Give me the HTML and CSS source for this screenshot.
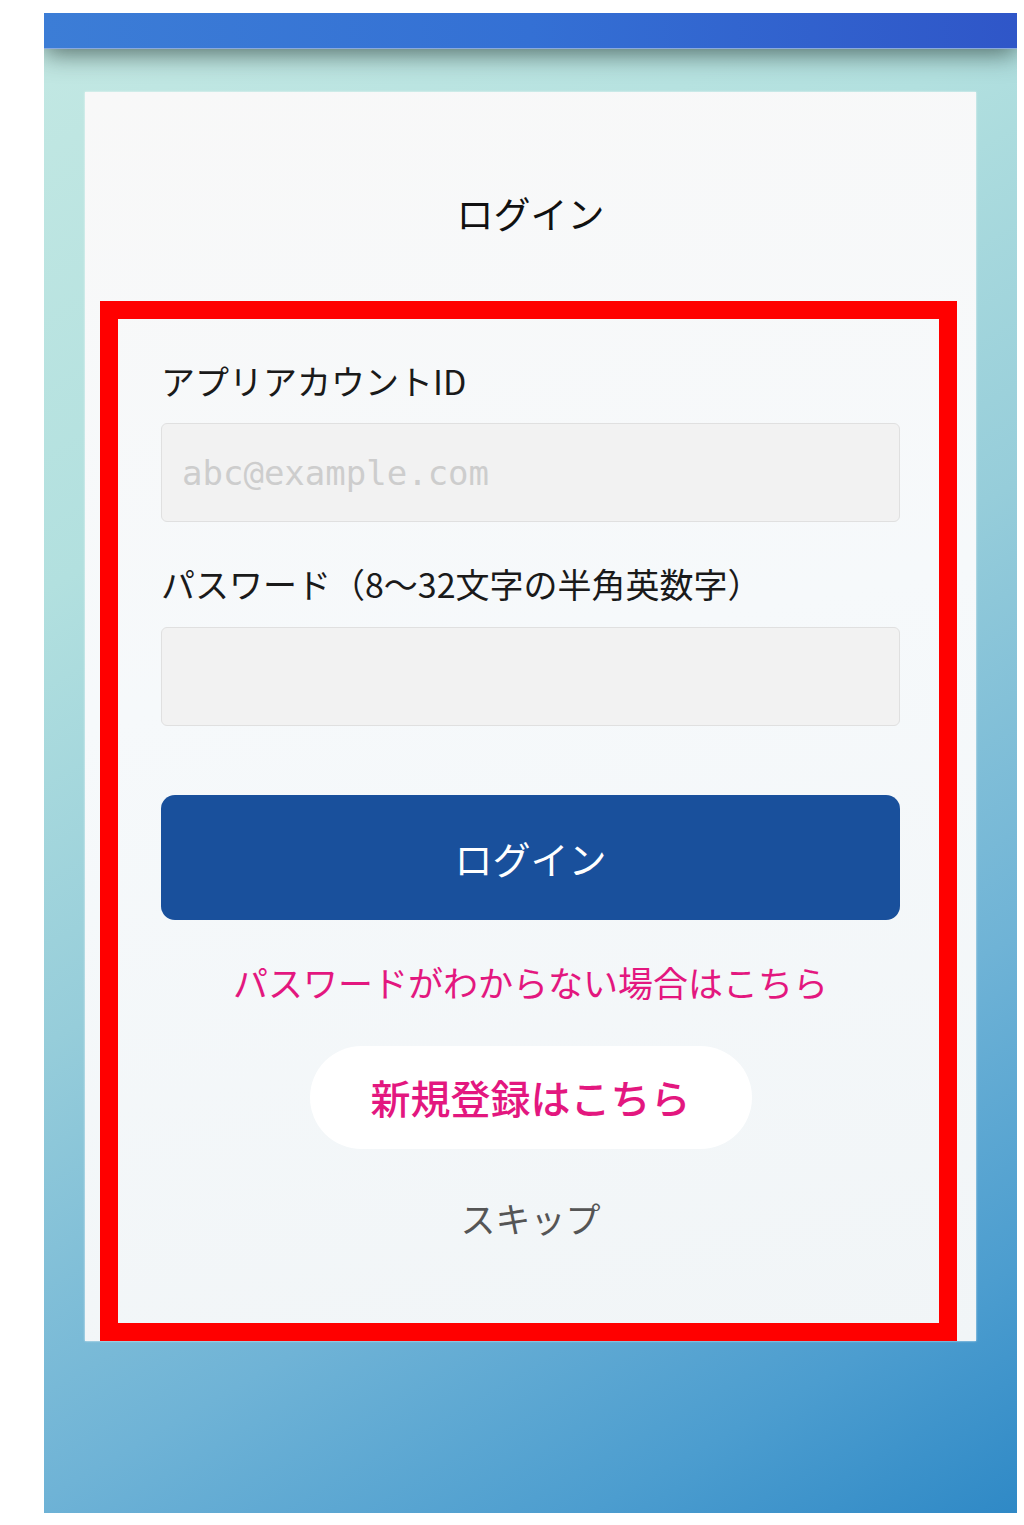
FILE: index.html
```html
<!DOCTYPE html>
<html lang="ja">
<head>
    <meta charset="UTF-8">
    <meta name="viewport" content="width=device-width, initial-scale=1.0">
    <title>ログイン</title>
    <link rel="stylesheet" href="styles.css">
</head>
<body>
    <div class="screen">
        <div class="app-bar"></div>

        <div class="login-card">
            <h1 class="login-title">ログイン</h1>

            <div class="highlight">
                <label class="field-label" for="account-id">アプリアカウントID</label>
                <input class="field-input mono" id="account-id" type="text" placeholder="abc@example.com">

                <label class="field-label" for="password">パスワード（8〜32文字の半角英数字）</label>
                <input class="field-input" id="password" type="password">

                <button class="login-btn" type="button">ログイン</button>

                <a class="forgot-link" href="#">パスワードがわからない場合はこちら</a>

                <a class="register-btn" href="#">新規登録はこちら</a>

                <a class="skip-link" href="#">スキップ</a>
            </div>
        </div>
    </div>
</body>
</html>
```

FILE: styles.css
```css
body {
    margin: 0;
    background: #fff;
    font-family: "Noto Sans CJK JP", "Noto Sans", sans-serif;
}
.screen {
    margin: 13px 0 0 44px;
    width: 973px;
    height: 1500px;
    overflow: hidden;
    background: linear-gradient(150deg, #c3e8e3 0%, #b2e0df 28%, #96cdda 50%, #6fb3d6 72%, #4c9dcf 88%, #2f89c6 100%);
}
.app-bar {
    position: relative;
    height: 35px;
    background: linear-gradient(90deg, #3c7dd6 0%, #3470d4 50%, #2f56c8 100%);
    border-bottom: 1px solid #8aa9de;
    box-shadow: 0 4px 26px rgba(40, 60, 55, 0.75);
}
.login-card {
    margin: 43px 41px 0 41px;
    padding-top: 97px;
    background: linear-gradient(170deg, #f8f8f8 0%, #f6f9fb 45%, #f1f5f7 100%);
    box-shadow: 0 0 2px rgba(255, 255, 255, 0.8);
}
.login-title {
    margin: 0;
    font-size: 37px;
    font-weight: 400;
    line-height: 48px;
    text-align: center;
    color: #111;
}
.highlight {
    display: flex;
    flex-direction: column;
    margin: 64px 19px -2px 15px;
    padding: 40px 39px 83px 43px;
    border: 18px solid #ff0000;
}
.field-label {
    font-size: 34px;
    line-height: 44px;
    color: #1a1a1a;
    margin-bottom: 20px;
    white-space: nowrap;
}
.field-label + .field-input + .field-label {
    margin-bottom: 21px;
}
.field-input {
    box-sizing: border-box;
    height: 99px;
    margin: 0 0 40px 0;
    padding: 0 20px;
    border: 1px solid #e0e0e0;
    border-radius: 6px;
    background: #f2f2f2;
    font-size: 34px;
}
.field-input + .field-label + .field-input {
    margin-bottom: 69px;
}
.mono {
    font-family: "DejaVu Sans Mono", "Liberation Mono", monospace;
}
.mono::placeholder {
    color: #cdcdcd;
}
.login-btn {
    height: 125px;
    border: none;
    border-radius: 14px;
    background: #19509c;
    color: #fff;
    font-family: inherit;
    font-size: 38px;
    margin-bottom: 40px;
}
.forgot-link {
    font-size: 35px;
    line-height: 44px;
    text-align: center;
    color: #e3177f;
    text-decoration: none;
    margin-bottom: 42px;
}
.register-btn {
    align-self: center;
    width: 442px;
    height: 103px;
    line-height: 103px;
    border-radius: 52px;
    background: #fff;
    color: #e3177f;
    font-size: 40px;
    font-weight: 500;
    text-align: center;
    text-decoration: none;
    margin-bottom: 47px;
}
.skip-link {
    font-size: 35px;
    line-height: 44px;
    text-align: center;
    color: #555;
    text-decoration: none;
}
```
